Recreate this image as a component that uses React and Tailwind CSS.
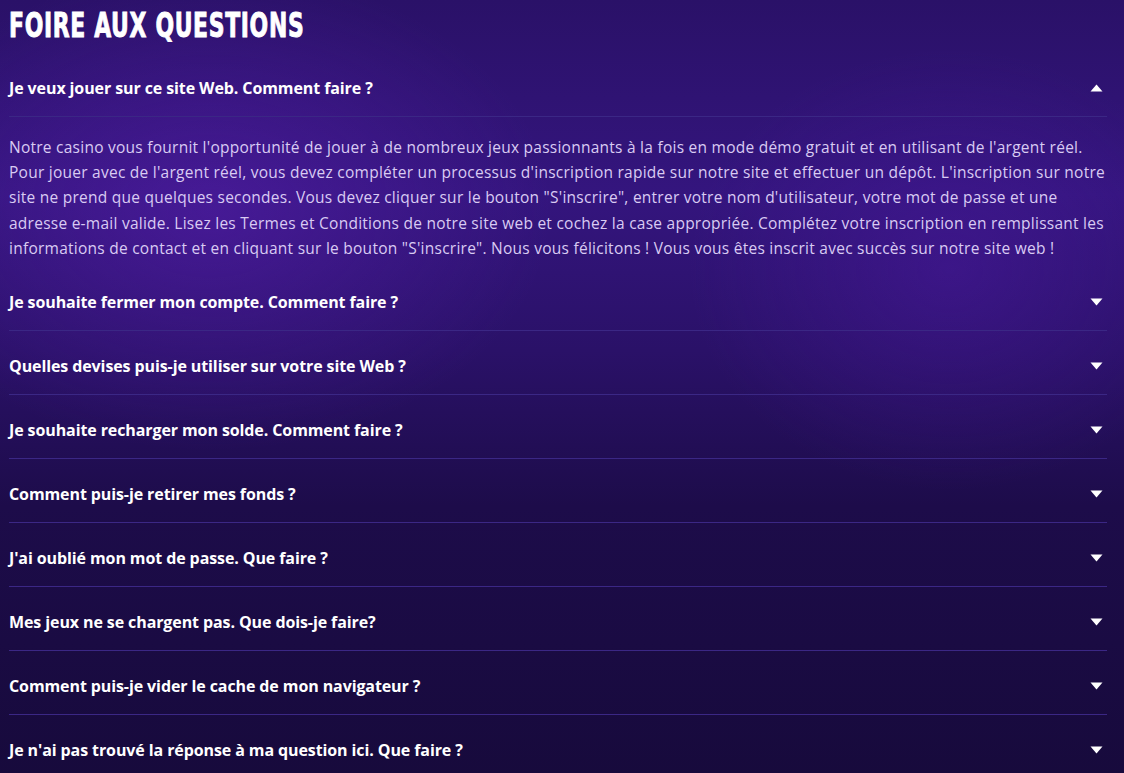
import React, { useState } from "react";

const faqs = [
  {
    q: "Je veux jouer sur ce site Web. Comment faire ?",
    a: [
      "Notre casino vous fournit l'opportunité de jouer à de nombreux jeux passionnants à la fois en mode démo gratuit et en utilisant de l'argent réel.",
      "Pour jouer avec de l'argent réel, vous devez compléter un processus d'inscription rapide sur notre site et effectuer un dépôt. L'inscription sur notre",
      "site ne prend que quelques secondes. Vous devez cliquer sur le bouton \"S'inscrire\", entrer votre nom d'utilisateur, votre mot de passe et une",
      "adresse e-mail valide. Lisez les Termes et Conditions de notre site web et cochez la case appropriée. Complétez votre inscription en remplissant les",
      "informations de contact et en cliquant sur le bouton \"S'inscrire\". Nous vous félicitons ! Vous vous êtes inscrit avec succès sur notre site web !",
    ],
  },
  { q: "Je souhaite fermer mon compte. Comment faire ?" },
  { q: "Quelles devises puis-je utiliser sur votre site Web ?" },
  { q: "Je souhaite recharger mon solde. Comment faire ?" },
  { q: "Comment puis-je retirer mes fonds ?" },
  { q: "J'ai oublié mon mot de passe. Que faire ?" },
  { q: "Mes jeux ne se chargent pas. Que dois-je faire?" },
  { q: "Comment puis-je vider le cache de mon navigateur ?" },
  { q: "Je n'ai pas trouvé la réponse à ma question ici. Que faire ?" },
];

const Caret = ({ up }) => (
  <svg width="13" height="8" viewBox="0 0 13 8" className={up ? "rotate-180" : ""}>
    <path d="M0.5 0.5 L12.5 0.5 L6.5 7.5 Z" fill="#ffffff" />
  </svg>
);

export default function App() {
  const [open, setOpen] = useState(0);

  return (
    <div className="min-h-[773px] w-full overflow-hidden bg-[radial-gradient(ellipse_340px_240px_at_210px_210px,rgba(85,30,170,0.55),transparent),radial-gradient(ellipse_260px_220px_at_950px_270px,rgba(75,25,160,0.45),transparent),linear-gradient(180deg,#2a1168_0%,#34157e_25%,#2a1168_45%,#1d0c4a_65%,#170a3c_100%)] font-['Open_Sans',sans-serif] text-white">
      <div className="pl-[9px] pr-[17px]">
        <h1 className="flex h-[34px] items-center overflow-visible pt-[2px] mt-[7px]">
          <span className="block origin-left scale-x-[0.645] whitespace-nowrap font-['DejaVu_Sans',sans-serif] text-[34px] font-bold leading-[34px] tracking-[1px] [-webkit-text-stroke:1px_white]">
            FOIRE AUX QUESTIONS
          </span>
        </h1>
        <div className="mt-[12px]">
          {faqs.map((f, i) => (
            <div key={i}>
              <button
                onClick={() => setOpen(open === i ? -1 : i)}
                className="flex h-[64px] w-full items-center justify-between border-b border-[#3b2785] pt-[6px] text-left"
              >
                <span className="text-[16px] font-bold tracking-[-0.1px]">{f.q}</span>
                <span className="mr-[4px]">
                  <Caret up={open === i} />
                </span>
              </button>
              {open === i && f.a && (
                <div className="pt-[18px] pb-[6px] text-[15.5px] leading-[25.2px] tracking-[0.25px] text-[#d9cbf3]">
                  {f.a.map((line, j) => (
                    <div key={j} className="whitespace-nowrap">
                      {line}
                    </div>
                  ))}
                </div>
              )}
            </div>
          ))}
        </div>
      </div>
    </div>
  );
}
